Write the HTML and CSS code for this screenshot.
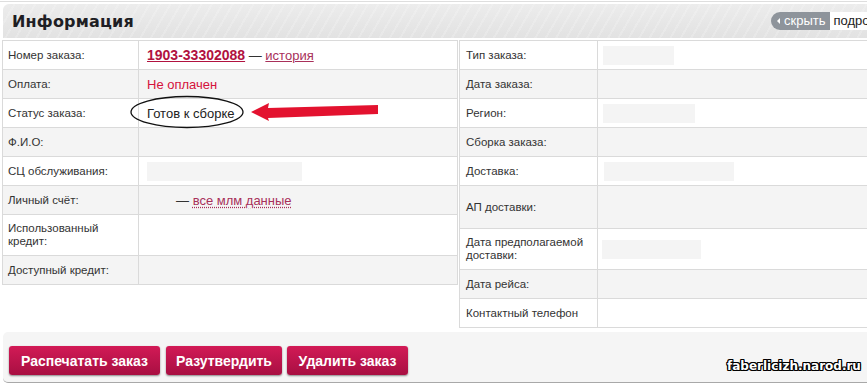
FILE: index.html
```html
<!DOCTYPE html>
<html lang="ru">
<head>
<meta charset="utf-8">
<title>Информация</title>
<link rel="stylesheet" href="styles.css">
</head>
<body>
<div class="page">
  <div class="head">
    <h1 class="title">Информация</h1>
    <div class="toggle"><span class="hide"><span class="tri"></span>скрыть</span><span class="more">подробнее</span></div>
  </div>
  <div class="tables">
    <div class="tbl left">
      <div class="row"><div class="lab">Номер заказа:</div><div class="val"><span><a class="num">1903-33302088</a> <span class="dash">—</span> <a class="lnk">история</a></span></div></div>
      <div class="row alt"><div class="lab">Оплата:</div><div class="val red">Не оплачен</div></div>
      <div class="row"><div class="lab">Статус заказа:</div><div class="val">Готов к сборке</div></div>
      <div class="row alt"><div class="lab">Ф.И.О:</div><div class="val"></div></div>
      <div class="row"><div class="lab">СЦ обслуживания:</div><div class="val"><span class="blank b-sc"></span></div></div>
      <div class="row alt"><div class="lab">Личный счёт:</div><div class="val acct"><span><span class="dash">—</span> <a class="dotted">все млм данные</a></span></div></div>
      <div class="row tall"><div class="lab">Использованный<br>кредит:</div><div class="val"></div></div>
      <div class="row alt"><div class="lab">Доступный кредит:</div><div class="val"></div></div>
    </div>
    <div class="tbl right">
      <div class="row"><div class="lab">Тип заказа:</div><div class="val"><span class="blank b-type"></span></div></div>
      <div class="row alt"><div class="lab">Дата заказа:</div><div class="val"></div></div>
      <div class="row"><div class="lab">Регион:</div><div class="val"><span class="blank b-reg"></span></div></div>
      <div class="row alt"><div class="lab">Сборка заказа:</div><div class="val"></div></div>
      <div class="row"><div class="lab">Доставка:</div><div class="val"><span class="blank b-del"></span></div></div>
      <div class="row alt tall2"><div class="lab">АП доставки:</div><div class="val"></div></div>
      <div class="row tall"><div class="lab">Дата предполагаемой<br>доставки:</div><div class="val"><span class="blank b-date"></span></div></div>
      <div class="row alt"><div class="lab">Дата рейса:</div><div class="val"></div></div>
      <div class="row last"><div class="lab">Контактный телефон</div><div class="val"></div></div>
    </div>
  </div>
  <div class="actions">
    <button class="btn b1">Распечатать заказ</button>
    <button class="btn b2">Разутвердить</button>
    <button class="btn b3">Удалить заказ</button>
  </div>
  <svg class="annot" width="260" height="40" viewBox="0 0 260 40">
    <ellipse cx="57" cy="17" rx="56" ry="15.5" fill="none" stroke="#111" stroke-width="1.3"/>
    <polygon points="121,17 139,8 138,13 248,10 248,19 138,23 139,26" fill="#e3122f"/>
  </svg>
  <div class="wm">faberlicizh.narod.ru</div>
</div>
</body>
</html>
```

FILE: styles.css
```css
html, body {
  margin: 0;
  padding: 0;
  overflow: hidden;
  background: #fff;
}
body {
  font-family: "Liberation Sans", Arial, sans-serif;
  color: #333;
}
.page {
  position: relative;
  width: 940px;
  height: 383px;
  border-top: 1px solid #dedede;
  margin-top: 1px;
  padding-top: 2px;
  box-sizing: border-box;
}
.head {
  margin-left: 3px;
  height: 34px;
  border-radius: 6px 0 0 0;
  background: repeating-linear-gradient(120deg, rgba(255,255,255,0.18) 0 2px, rgba(255,255,255,0) 2px 9px),
              linear-gradient(#ececec, #e2e2e2);
  display: grid;
  grid-template-columns: 768px auto;
  align-items: center;
}
.title {
  margin: 0 0 0 9px;
  font-family: "DejaVu Sans", sans-serif;
  font-size: 16px;
  font-weight: bold;
  color: #1e1e24;
  letter-spacing: 0.2px;
}
.toggle {
  display: flex;
  height: 18px;
  font-size: 13px;
  line-height: 18px;
}
.hide {
  background: #8e949b;
  color: #fff;
  border-radius: 9px 0 0 9px;
  padding: 0 4px 0 6px;
  display: flex;
  align-items: center;
}
.tri {
  width: 0;
  height: 0;
  border-top: 3px solid transparent;
  border-bottom: 3px solid transparent;
  border-right: 3px solid #fff;
  margin-right: 4px;
}
.more {
  background: #fff;
  color: #222;
  padding: 0 4px;
}
.tables {
  display: flex;
  align-items: flex-start;
  margin-top: 2px;
  margin-left: 2px;
}
.tbl {
  border-top: 1px solid #dadada;
  border-left: 1px solid #dadada;
  font-size: 11.5px;
}
.left {
  width: 456px;
  box-sizing: border-box;
}
.right {
  flex: 1;
  margin-left: 1px;
}
.row {
  display: grid;
  grid-template-columns: 136px 1fr;
  height: 29px;
  border-bottom: 1px solid #dadada;
  box-sizing: border-box;
}
.left .row { border-right: 1px solid #dadada; }
.right .row { grid-template-columns: 138px 1fr; }
.row.tall { height: 41px; }
.row.tall2 { height: 43px; }
.row.alt { background: #f4f4f4; }
.lab {
  border-right: 1px solid #dadada;
  padding: 0 5px;
  display: flex;
  align-items: center;
  line-height: 13px;
  color: #333;
}
.right .lab { padding-left: 6px; }
.val {
  display: flex;
  align-items: center;
  padding-left: 8px;
  font-size: 13px;
  color: #222;
  white-space: pre;
}
.num {
  font-weight: bold;
  font-size: 14px;
  color: #b1123f;
  text-decoration: underline;
}
.dash { color: #333; }
.lnk {
  color: #a8305a;
  text-decoration: underline;
}
.red { color: #d4123c; }
.acct { padding-left: 37px; }
.dotted {
  color: #a8305a;
  text-decoration: underline dotted;
  text-underline-offset: 2px;
}
.blank {
  display: block;
  height: 19px;
  background: #f4f4f4;
}
.b-sc { width: 155px; }
.b-type { width: 71px; margin-left: -3px; }
.b-reg { width: 92px; margin-left: -3px; }
.b-del { width: 130px; margin-left: -2px; }
.b-date { width: 99px; margin-left: -4px; }
.actions {
  position: absolute;
  left: 3px;
  top: 330px;
  width: 937px;
  height: 51px;
  box-sizing: border-box;
  background: #f5f5f5;
  border-bottom: 1px solid #a8a8a8;
  border-radius: 5px 0 0 5px;
  display: flex;
  align-items: flex-start;
  gap: 5px;
  padding: 14px 0 0 6px;
}
.btn {
  height: 29px;
  border: none;
  border-radius: 3px;
  background: linear-gradient(#d21a56, #a80f42);
  box-shadow: 0 1px 2px rgba(0,0,0,0.45);
  color: #fff;
  font-family: "Liberation Sans", Arial, sans-serif;
  font-weight: bold;
  font-size: 14px;
  padding: 0;
}
.b1 { width: 151px; }
.b2 { width: 116px; margin-left: 1px; }
.b3 { width: 121px; }
.annot {
  position: absolute;
  left: 130px;
  top: 93px;
  overflow: visible;
}
.wm {
  position: absolute;
  left: 727px;
  top: 357px;
  font-family: "DejaVu Sans", sans-serif;
  font-weight: bold;
  font-size: 12px;
  color: #fff;
  letter-spacing: 0;
  text-shadow: 1px 0 0 #000, -1px 0 0 #000, 0 1px 0 #000, 0 -1px 0 #000,
               1px 1px 0 #000, -1px -1px 0 #000, 1px -1px 0 #000, -1px 1px 0 #000;
}
```
